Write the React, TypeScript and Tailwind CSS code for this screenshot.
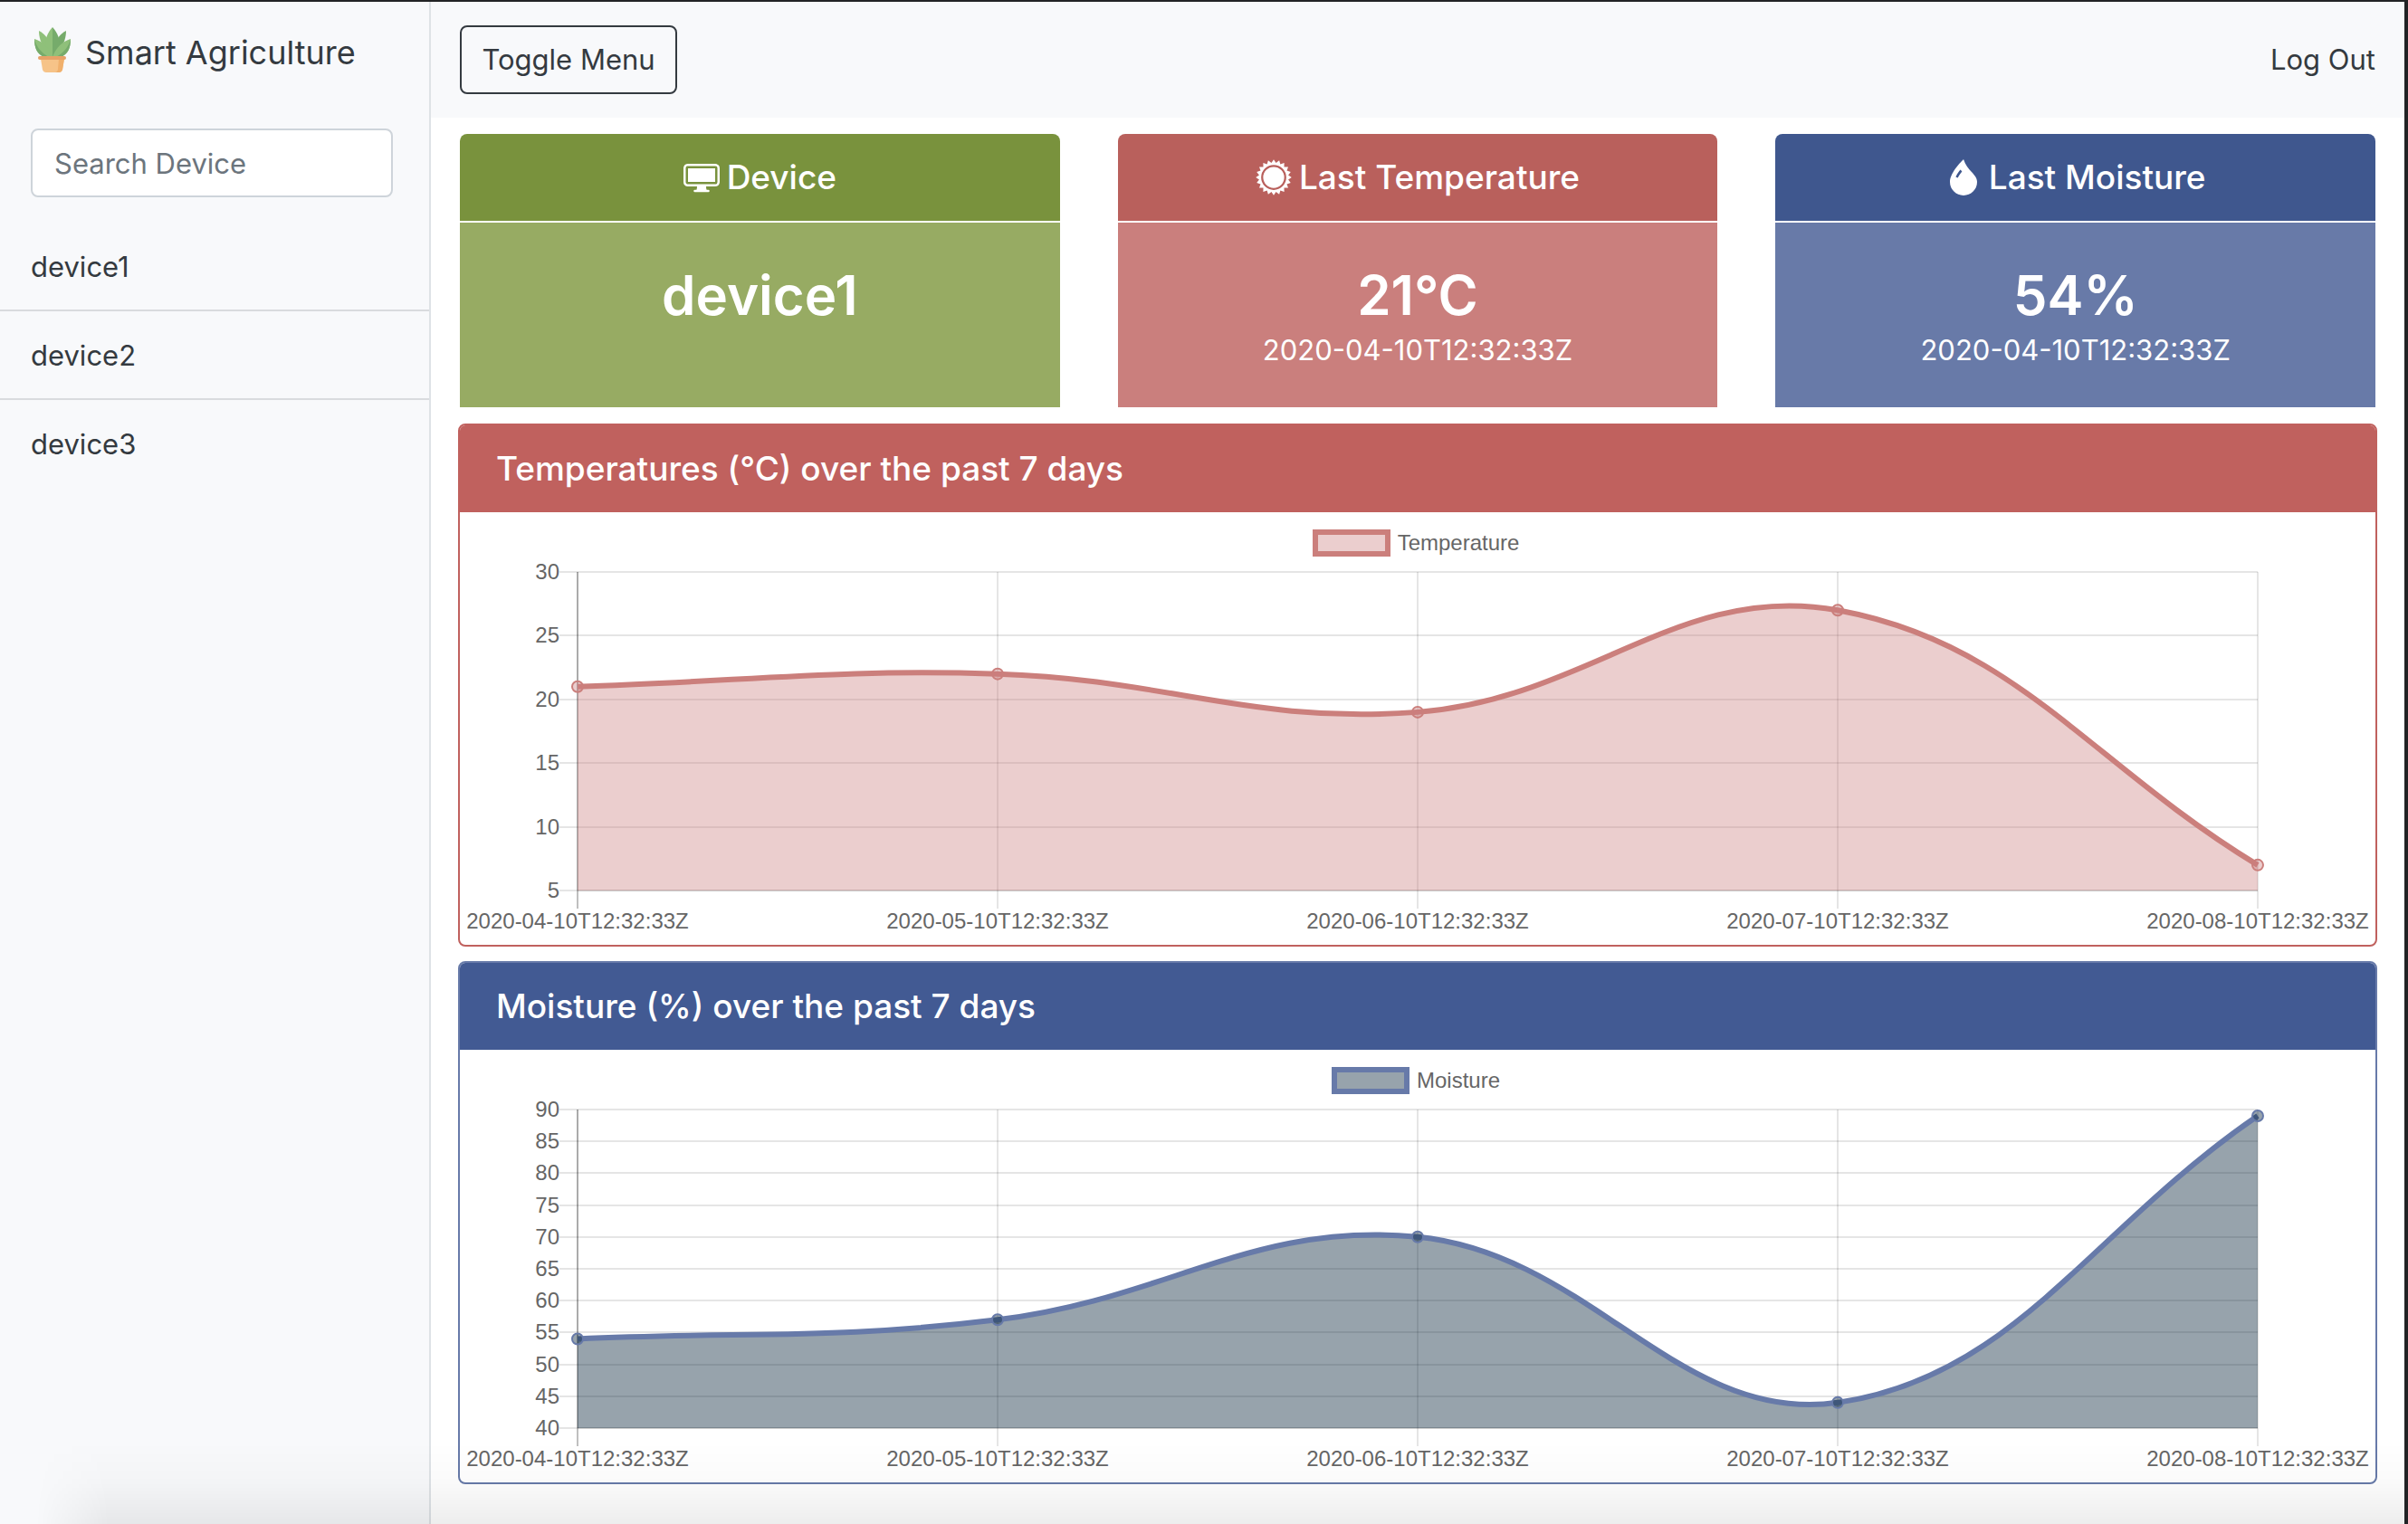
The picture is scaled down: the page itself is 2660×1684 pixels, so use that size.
import { useEffect, useRef, useState } from "react";
import type { ReactNode } from "react";

type Series = {
  label: string;
  values: number[];
  min: number;
  max: number;
  step: number;
  line: string;
  fill: string;
};

const dates = [
  "2020-04-10T12:32:33Z",
  "2020-05-10T12:32:33Z",
  "2020-06-10T12:32:33Z",
  "2020-07-10T12:32:33Z",
  "2020-08-10T12:32:33Z",
];

const temperature: Series = {
  label: "Temperature",
  values: [21, 22, 19, 27, 7],
  min: 5,
  max: 30,
  step: 5,
  line: "#cb7f7c",
  fill: "rgba(203,127,127,0.38)",
};

const moisture: Series = {
  label: "Moisture",
  values: [54, 57, 70, 44, 89],
  min: 40,
  max: 90,
  step: 5,
  line: "#677aa9",
  fill: "rgba(7,36,57,0.42)",
};

const devices = ["device1", "device2", "device3"];

const PAD_X = 130;
const TOP = 66;
const BOTTOM = 418;
const HEIGHT = 478;
const TENSION = 0.4;

type Point = { x: number; y: number };

// Cardinal-style spline: each point's handles follow the line between its neighbours.
function spline(points: Point[], right: number) {
  const clampX = (v: number) => Math.min(Math.max(v, PAD_X), right);
  const clampY = (v: number) => Math.min(Math.max(v, TOP), BOTTOM);
  const handles = points.map((p, i) => {
    const prev = points[i - 1] ?? p;
    const next = points[i + 1] ?? p;
    const d0 = Math.hypot(p.x - prev.x, p.y - prev.y);
    const d1 = Math.hypot(next.x - p.x, next.y - p.y);
    const a = (TENSION * d0) / (d0 + d1);
    const b = (TENSION * d1) / (d0 + d1);
    return {
      before: { x: clampX(p.x - a * (next.x - prev.x)), y: clampY(p.y - a * (next.y - prev.y)) },
      after: { x: clampX(p.x + b * (next.x - prev.x)), y: clampY(p.y + b * (next.y - prev.y)) },
    };
  });
  let d = `M${points[0].x} ${points[0].y}`;
  for (let i = 1; i < points.length; i++) {
    const h1 = handles[i - 1].after;
    const h2 = handles[i].before;
    d += ` C${h1.x} ${h1.y} ${h2.x} ${h2.y} ${points[i].x} ${points[i].y}`;
  }
  return d;
}

function LineChart({ series }: { series: Series }) {
  const box = useRef<HTMLDivElement>(null);
  const [width, setWidth] = useState(2116);

  useEffect(() => {
    const el = box.current;
    if (!el) return;
    const observer = new ResizeObserver(() => setWidth(Math.max(el.clientWidth, 600)));
    observer.observe(el);
    return () => observer.disconnect();
  }, []);

  const right = width - PAD_X;
  const toX = (i: number) => PAD_X + ((right - PAD_X) * i) / (dates.length - 1);
  const toY = (v: number) => BOTTOM - ((v - series.min) / (series.max - series.min)) * (BOTTOM - TOP);
  const ticks: number[] = [];
  for (let v = series.max; v >= series.min; v -= series.step) ticks.push(v);
  const points = series.values.map((v, i) => ({ x: toX(i), y: toY(v) }));
  const curve = spline(points, right);

  return (
    <div ref={box} className="relative w-full">
      <div className="absolute inset-x-0 top-[19px] flex items-center justify-center gap-2 pr-1 text-2xl leading-[30px] text-[#666666]">
        <span
          className="h-[30px] w-[86px] border-[6px]"
          style={{ borderColor: series.line, backgroundColor: series.fill, backgroundClip: "padding-box" }}
        />
        {series.label}
      </div>
      <svg
        className="block w-full text-2xl"
        height={HEIGHT}
        viewBox={`0 0 ${width} ${HEIGHT}`}
        role="img"
        aria-label={`${series.label} chart`}
      >
        <g stroke="rgba(0,0,0,0.1)" strokeWidth="2">
          {ticks.map((v) => (
            <line key={v} x1={PAD_X - 20} x2={right} y1={Math.round(toY(v))} y2={Math.round(toY(v))} />
          ))}
          {dates.map((date, i) => (
            <line
              key={date}
              x1={Math.round(toX(i))}
              x2={Math.round(toX(i))}
              y1={TOP}
              y2={BOTTOM + 20}
              stroke={i === 0 ? "rgba(0,0,0,0.25)" : undefined}
            />
          ))}
          <line x1={PAD_X} x2={PAD_X} y1={TOP} y2={BOTTOM} />
          <line x1={PAD_X} x2={right} y1={BOTTOM} y2={BOTTOM} />
        </g>
        <path d={`${curve} L${right} ${BOTTOM} L${PAD_X} ${BOTTOM} Z`} fill={series.fill} />
        <path d={curve} fill="none" stroke={series.line} strokeWidth="6" />
        {points.map((p) => (
          <circle key={p.x} cx={p.x} cy={p.y} r="6" fill={series.fill} stroke={series.line} strokeWidth="2" />
        ))}
        <g fill="#666666">
          {ticks.map((v) => (
            <text key={v} x={PAD_X - 20} y={Math.round(toY(v)) + 8} textAnchor="end">
              {v}
            </text>
          ))}
          {dates.map((date, i) => (
            <text key={date} x={toX(i)} y={BOTTOM + 42} textAnchor="middle">
              {date}
            </text>
          ))}
        </g>
      </svg>
    </div>
  );
}

function PlantIcon() {
  return (
    <svg className="mb-1.5 h-[50px] w-10" viewBox="0 0 40 50" aria-hidden="true">
      <path d="M5 4C11 7 15 12 17 19L12 24C7 18 5 11 5 4Z" fill="#8fc07a" />
      <path d="M35 4C29 7 25 12 23 19L28 24C33 18 35 11 35 4Z" fill="#76ab6b" />
      <path d="M20 0C14 7 12 13 12 19C12 25 15 30 20 33Z" fill="#8fc07a" />
      <path d="M20 0C26 7 28 13 28 19C28 25 25 30 20 33Z" fill="#76ab6b" />
      <path d="M0 13C9 16 16 22 20 33H11C3 30 0 23 0 13Z" fill="#8fc07a" />
      <path d="M0 13C2 21 7 28 16 33H11C3 30 0 23 0 13Z" fill="#76ab6b" />
      <path d="M40 13C31 16 24 22 20 33H29C37 30 40 23 40 13Z" fill="#8fc07a" />
      <path d="M40 13C38 21 33 28 24 33H29C37 30 40 23 40 13Z" fill="#76ab6b" />
      <path d="M7 35H33L31 47Q30 50 27 50H13Q10 50 9 47Z" fill="#f6c388" />
      <path d="M27 35H33L31 47Q30 50 27 50H23Q26 49 26 46Z" fill="#f0b06c" />
      <rect x="4" y="32" width="31" height="4" rx="2" fill="#e6a267" />
    </svg>
  );
}

function DisplayIcon() {
  return (
    <svg className="size-10" viewBox="0 0 16 16" fill="currentColor" aria-hidden="true">
      <path d="M5.75 13.5c.167-.333.25-.833.25-1.5h4c0 .667.083 1.167.25 1.5H11a.5.5 0 0 1 0 1H5a.5.5 0 0 1 0-1h.75z" />
      <path
        fillRule="evenodd"
        d="M13.991 3H2c-.325 0-.502.078-.602.145a.758.758 0 0 0-.254.302A1.46 1.46 0 0 0 1 4.01V10c0 .325.078.502.145.602.07.105.17.188.302.254a1.464 1.464 0 0 0 .538.143L2.01 11H14c.325 0 .502-.078.602-.145a.758.758 0 0 0 .254-.302 1.464 1.464 0 0 0 .143-.538L15 9.99V4c0-.325-.078-.502-.145-.602a.757.757 0 0 0-.302-.254A1.46 1.46 0 0 0 13.99 3zM14 2H2C0 2 0 4 0 4v6c0 2 2 2 2 2h12c2 0 2-2 2-2V4c0-2-2-2-2-2z"
      />
      <path d="M2 4h12v6H2z" />
    </svg>
  );
}

function SunIcon() {
  const teeth = 20;
  const outline = Array.from({ length: teeth * 2 }, (_, i) => {
    const angle = (Math.PI * i) / teeth - Math.PI / 2;
    const r = i % 2 === 0 ? 7.9 : 6.5;
    return `${8 + r * Math.cos(angle)},${8 + r * Math.sin(angle)}`;
  }).join(" ");
  return (
    <svg className="size-10" viewBox="0 0 16 16" fill="currentColor" aria-hidden="true">
      <polygon points={outline} />
      <circle cx="8" cy="8" r="5.1" fill="none" stroke="#b9605c" strokeWidth="0.9" />
    </svg>
  );
}

function DropIcon() {
  return (
    <svg className="size-10" viewBox="0 0 16 16" fill="currentColor" aria-hidden="true">
      <path
        fillRule="evenodd"
        d="M8 16a6 6 0 0 0 6-6c0-1.655-1.122-2.904-2.432-4.362C10.254 4.176 8.75 2.503 8 0c0 0-6 5.686-6 10a6 6 0 0 0 6 6zM6.646 4.646c-.376.377-1.272 1.489-2.093 3.13l.894.448c.78-1.559 1.616-2.58 1.907-2.87l-.708-.708z"
      />
    </svg>
  );
}

type CardProps = {
  icon: ReactNode;
  title: string;
  value: string;
  time?: string;
  head: string;
  body: string;
};

function StatCard({ icon, title, value, time, head, body }: CardProps) {
  return (
    <section className="flex flex-1 flex-col gap-0.5 text-center text-white">
      <h2 className={`flex h-24 items-center justify-center gap-2 rounded-t-lg text-[37px] font-medium ${head}`}>
        {icon}
        {title}
      </h2>
      <div className={`h-[204px] pt-10 ${body}`}>
        <p className="text-6xl leading-[80px] font-semibold">{value}</p>
        {time && <p className="text-[31px] leading-[42px]">{time}</p>}
      </div>
    </section>
  );
}

type PanelProps = { title: string; series: Series; border: string; head: string };

function ChartPanel({ title, series, border, head }: PanelProps) {
  return (
    <section className={`-mx-0.5 rounded-lg border-2 ${border}`}>
      <h2 className={`flex h-24 items-center rounded-t-md px-10 font-['Inter',sans-serif] text-[37px] font-medium text-white ${head}`}>
        {title}
      </h2>
      <LineChart series={series} />
    </section>
  );
}

export default function App() {
  const [menuOpen, setMenuOpen] = useState(true);
  const [query, setQuery] = useState("");

  return (
    <div className="relative flex min-h-screen border-t-2 border-r-4 border-[#222325] bg-white font-['Liberation_Sans',sans-serif]">
      {menuOpen && (
        <aside className="w-[476px] shrink-0 border-r-2 border-[#dee2e6] bg-[#f8f9fb] font-['Inter',sans-serif] text-[31px] text-[#343a40]">
          <h1 className="flex h-[112px] items-center gap-4 pl-[38px] text-4xl">
            <PlantIcon />
            Smart Agriculture
          </h1>
          <div className="px-[34px] pt-7 pb-7">
            <input
              type="search"
              aria-label="Search Device"
              placeholder="Search Device"
              value={query}
              onChange={(e) => setQuery(e.target.value)}
              className="h-[76px] w-[400px] rounded-lg border-2 border-[#ced4da] bg-white px-6 placeholder:text-[#6c757d]"
            />
          </div>
          <nav className="divide-y-2 divide-[#d9dbde]">
            {devices
              .filter((name) => name.includes(query))
              .map((name) => (
                <a key={name} href={`#${name}`} className="block px-[34px] pt-[25px] pb-[23px] leading-[48px]">
                  {name}
                </a>
              ))}
          </nav>
        </aside>
      )}

      <div className="min-w-0 flex-1">
        <header className="flex h-32 items-center justify-between bg-[#f8f9fb] px-8 font-['Inter',sans-serif] text-[31px] text-[#343a40]">
          <button
            type="button"
            onClick={() => setMenuOpen(!menuOpen)}
            className="h-[76px] w-[240px] rounded-lg border-2 border-[#343a40]"
          >
            Toggle Menu
          </button>
          <a href="#logout">Log Out</a>
        </header>

        <main className="flex flex-col gap-4 px-8 pt-[18px]">
          <div className="mb-0.5 flex gap-16 font-['Inter',sans-serif]">
            <StatCard icon={<DisplayIcon />} title="Device" value="device1" head="bg-[#79923d]" body="bg-[#97ab63]" />
            <StatCard
              icon={<SunIcon />}
              title="Last Temperature"
              value="21°C"
              time="2020-04-10T12:32:33Z"
              head="bg-[#b9605c]"
              body="bg-[#ca7f7d]"
            />
            <StatCard
              icon={<DropIcon />}
              title="Last Moisture"
              value="54%"
              time="2020-04-10T12:32:33Z"
              head="bg-[#3f578e]"
              body="bg-[#687aa8]"
            />
          </div>
          <ChartPanel
            title="Temperatures (°C) over the past 7 days"
            series={temperature}
            border="border-[#c0615e]"
            head="bg-[#c0615e]"
          />
          <ChartPanel
            title="Moisture (%) over the past 7 days"
            series={moisture}
            border="border-[#677aa9]"
            head="bg-[#425a93]"
          />
        </main>
      </div>

      <div className="pointer-events-none absolute inset-x-0 bottom-0 h-[90px] bg-gradient-to-t from-black/7 via-black/2 to-transparent [mask-image:linear-gradient(to_right,transparent_40px,black_120px)]" />
    </div>
  );
}
